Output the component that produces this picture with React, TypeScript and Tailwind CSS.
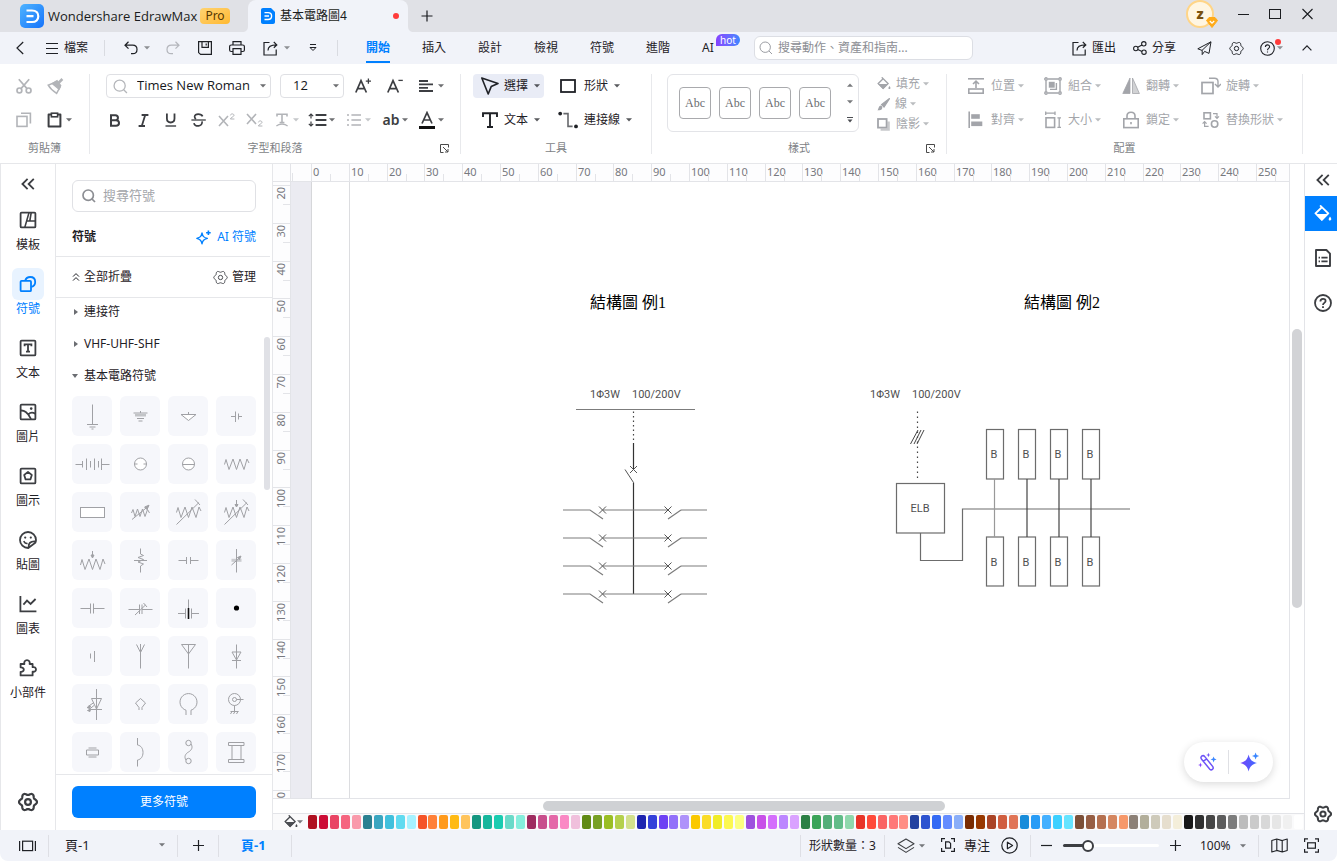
import React from "react";

type IconProps = {
  w: number;
  h: number;
  children: React.ReactNode;
  className?: string;
  sw?: number;
};

function Icon({ w, h, children, className = "", sw = 1.2 }: IconProps) {
  return (
    <svg
      width={w}
      height={h}
      viewBox={`0 0 ${w} ${h}`}
      fill="none"
      stroke="currentColor"
      strokeWidth={sw}
      className={`shrink-0 ${className}`}
      aria-hidden="true"
    >
      {children}
    </svg>
  );
}

function Caret({ className = "" }: { className?: string }) {
  return (
    <svg width="6" height="4" viewBox="0 0 6 4" className={`shrink-0 ${className}`} aria-hidden="true">
      <path d="M0 0.3H6L3 3.6Z" fill="currentColor" fillOpacity="0.75" />
    </svg>
  );
}

/* Six-lobed outline around the centre of an 18-unit box. */
const GEAR_PATH =
  Array.from({ length: 72 }, (_, i) => {
    const a = (i * Math.PI) / 36;
    const r = 7.2 + 0.9 * Math.cos(6 * a);
    return `${i === 0 ? "M" : "L"}${(9 + r * Math.cos(a)).toFixed(2)} ${(9 + r * Math.sin(a)).toFixed(2)}`;
  }).join("") + "Z";

function HexGear({ size, sw = 1.2, className = "" }: { size: number; sw?: number; className?: string }) {
  return (
    <svg
      width={size}
      height={size}
      viewBox="0 0 18 18"
      fill="none"
      stroke="currentColor"
      strokeWidth={sw}
      strokeLinejoin="round"
      className={`shrink-0 ${className}`}
      aria-hidden="true"
    >
      <path d={GEAR_PATH} />
      <circle cx="9" cy="9" r="2.6" />
    </svg>
  );
}

function Bucket({ size, className = "" }: { size: number; className?: string }) {
  return (
    <svg width={size} height={size} viewBox="0 0 16 16" className={`shrink-0 ${className}`} aria-hidden="true">
      <path d="M5.4 0.4L12.6 7.4L7 13L1.4 7.4L7 2" fill="none" stroke="currentColor" strokeWidth="1.6" />
      <path d="M1.2 8H13L7 14Z" fill="currentColor" />
      <path d="M14.2 10.2C15.2 11.6 15.8 12.5 15.1 13.4C14.5 14.1 13.4 13.8 13.1 13C12.9 12.2 13.5 11.3 14.2 10.2Z" fill="currentColor" />
    </svg>
  );
}

function ShareOut({ size, sw = 1.2 }: { size: number; sw?: number }) {
  return (
    <svg width={size} height={size} viewBox="0 0 15 15" fill="none" stroke="currentColor" strokeWidth={sw} className="shrink-0" aria-hidden="true">
      <path d="M6.5 1.5H1V14H13.2V8.5" />
      <path d="M5 9.5C5 6 7.5 3.9 13.5 3.9M10.8 1L13.8 3.9L10.8 6.8" />
    </svg>
  );
}

function Magnifier({ size, sw = 1.2 }: { size: number; sw?: number }) {
  return (
    <svg width={size} height={size} viewBox="0 0 14 14" fill="none" stroke="currentColor" strokeWidth={sw} className="shrink-0" aria-hidden="true">
      <circle cx="6.2" cy="6.2" r="5.2" />
      <path d="M10 10L13 13" />
    </svg>
  );
}

/* ---------- Title bar ---------- */

function TitleBar() {
  return (
    <header className="flex h-8 shrink-0 items-center bg-[#e0e1e6] pr-6 pl-5 text-[#1a1c20]">
      <svg width="24" height="24" viewBox="0 0 24 24" className="shrink-0" aria-hidden="true">
        <defs>
          <linearGradient id="logo" x1="0" y1="0" x2="1" y2="1">
            <stop offset="0" stopColor="#4fb4ff" />
            <stop offset="1" stopColor="#1573fb" />
          </linearGradient>
        </defs>
        <rect width="24" height="24" rx="5" fill="url(#logo)" />
        <path d="M6.5 6.5H12C16 6.5 18.3 9 18.3 12.2C18.3 15.5 16 18 12 18H6.5M6.5 12.2H13.5" fill="none" stroke="#fff" strokeWidth="2.2" />
      </svg>
      <span className="ml-1 w-[148px] font-['Open_Sans',sans-serif] text-[13px] leading-5 whitespace-nowrap">Wondershare EdrawMax</span>
      <span className="ml-1 flex h-4 w-[30px] items-center justify-center rounded-sm bg-gradient-to-br from-[#ffd36f] to-[#ffb92e] text-xs text-[#573800]">
        Pro
      </span>
      <svg width="6" height="6" viewBox="0 0 6 6" className="ml-3 self-end" aria-hidden="true">
        <path d="M6 0V6H0C4 6 6 4 6 0Z" fill="#f1f3f9" />
      </svg>
      <div className="flex h-8 w-40 items-center self-end rounded-t-lg bg-[#f1f3f9] pr-[9px] pl-[13px]">
        <svg width="14" height="16" viewBox="0 0 14 16" className="shrink-0" aria-hidden="true">
          <path d="M2 0H10L14 4V14C14 15.2 13.2 16 12 16H2C0.8 16 0 15.2 0 14V2C0 0.8 0.8 0 2 0Z" fill="#0080ff" />
          <path d="M3.5 4.6H7C9.4 4.6 10.6 6.1 10.6 8C10.6 9.9 9.4 11.5 7 11.5H3.5M3.5 8H8" fill="none" stroke="#fff" strokeWidth="1.4" />
        </svg>
        <span className="ml-[5px] text-xs">基本電路圖4</span>
        <span className="ml-auto h-1.5 w-1.5 rounded-full bg-[#ff3b3b]" />
      </div>
      <svg width="6" height="6" viewBox="0 0 6 6" className="self-end" aria-hidden="true">
        <path d="M0 0V6H6C2 6 0 4 0 0Z" fill="#f1f3f9" />
      </svg>
      <button type="button" aria-label="新增" className="ml-[7px]">
        <Icon w={12} h={12}>
          <path d="M6 0.5V11.5M0.5 6H11.5" />
        </Icon>
      </button>
      <button type="button" aria-label="帳戶" className="relative mb-1 ml-auto flex h-7 w-7 items-center justify-center rounded-full border-2 border-[#ffd587] bg-[#fff6e2]">
        <span className="text-sm font-black text-[#7a5210]">z</span>
        <svg width="12" height="11" viewBox="0 0 12 11" className="absolute -right-1.5 -bottom-0.5" aria-hidden="true">
          <path d="M3 0.5H9L11.5 3.5L6 10.5L0.5 3.5Z" fill="#ffab1a" stroke="#ffab1a" strokeLinejoin="round" />
          <path d="M3.8 4L6 6.2L8.2 4" stroke="#fff" strokeWidth="1.2" fill="none" />
        </svg>
      </button>
      <div className="mb-1 ml-6 flex items-center">
        <button type="button" aria-label="最小化">
          <Icon w={11} h={12} sw={1}>
            <path d="M0 6.5H11" />
          </Icon>
        </button>
        <button type="button" aria-label="最大化" className="ml-5">
          <Icon w={12} h={12} sw={1}>
            <rect x="0.5" y="1.5" width="11" height="9" />
          </Icon>
        </button>
        <button type="button" aria-label="關閉" className="ml-[21px]">
          <Icon w={11} h={12} sw={1.1}>
            <path d="M0.5 1L10.5 11M10.5 1L0.5 11" />
          </Icon>
        </button>
      </div>
    </header>
  );
}

/* ---------- Menu bar ---------- */

const MENU_TABS = ["開始", "插入", "設計", "檢視", "符號", "進階", "AI"];

function MenuBar() {
  return (
    <nav className="flex h-8 shrink-0 items-center bg-[#f1f3f9] pr-[25px] pl-4 text-[#1f2126]">
      <button type="button" aria-label="返回">
        <Icon w={8} h={14}>
          <path d="M7.2 1L1 7L7.2 13" />
        </Icon>
      </button>
      <button type="button" className="ml-[22px] flex items-center gap-1.5">
        <Icon w={12} h={13} sw={1}>
          <path d="M0 1.5H12M0 6.5H12M0 11.5H12" />
        </Icon>
        檔案
      </button>
      <span className="ml-4 h-4 w-px bg-[#d9dbe1]" />
      <button type="button" aria-label="復原" className="ml-[19px] flex items-center gap-1.5">
        <Icon w={14} h={14}>
          <path d="M4.5 0.8L1 4.2L4.5 7.6M1.2 4.2H8.6C11.4 4.2 13 6 13 8.4C13 10.9 11.3 12.6 8.8 12.6H7" />
        </Icon>
        <Caret className="text-[#6b6d72]" />
      </button>
      <button type="button" aria-label="重做" className="ml-4 text-[#b4b6bc]">
        <Icon w={14} h={14}>
          <path d="M9.5 0.8L13 4.2L9.5 7.6M12.8 4.2H5.4C2.6 4.2 1 6 1 8.4C1 10.9 2.7 12.6 5.2 12.6H7" />
        </Icon>
      </button>
      <button type="button" aria-label="儲存" className="ml-[18px]">
        <Icon w={14} h={14}>
          <path d="M0.6 0.6H13.4V13.4H2.6L0.6 11.6ZM4 0.6V6.4H10.4V0.6M8.2 2.4V4.4" />
        </Icon>
      </button>
      <button type="button" aria-label="列印" className="ml-[17px]">
        <Icon w={16} h={14}>
          <path d="M4 4V0.6H12V4M4 10.5H2.2C1.2 10.5 0.6 10 0.6 9V5.6C0.6 4.6 1.2 4 2.2 4H13.8C14.8 4 15.4 4.6 15.4 5.6V9C15.4 10 14.8 10.5 13.8 10.5H12M4 7.6H12V13.4H4Z" />
        </Icon>
      </button>
      <button type="button" aria-label="匯出檔案" className="ml-[18px] flex items-center gap-1.5">
        <ShareOut size={15} />
        <Caret className="text-[#6b6d72]" />
      </button>
      <button type="button" aria-label="更多" className="ml-[18px]">
        <Icon w={10} h={8} sw={1}>
          <path d="M2 0.5H8M2 3.5H8L5 6.5Z" />
        </Icon>
      </button>
      <span className="ml-[19px] h-4 w-px bg-[#d9dbe1]" />
      <div className="ml-3 flex h-full">
        {MENU_TABS.map((tab, i) => (
          <button
            key={tab}
            type="button"
            className={
              i === 0
                ? "relative flex h-full w-14 items-center px-4 font-bold text-[#0080ff]"
                : "relative flex h-full w-14 items-center px-4"
            }
          >
            {tab}
            {i === 0 && <span className="absolute bottom-px left-4 h-0.5 w-6 bg-[#0080ff]" />}
            {tab === "AI" && (
              <span className="absolute top-0.5 left-[30px] flex h-3 w-6 items-center justify-center rounded-full rounded-bl-none bg-gradient-to-r from-[#8540ff] to-[#3a86ff] text-[10px] leading-3 text-white">
                hot
              </span>
            )}
          </button>
        ))}
      </div>
      <label className="ml-3 flex h-6 w-[219px] items-center gap-[5px] rounded-md border border-[#dcdee4] bg-white pl-1 text-[#9b9da3]">
        <Magnifier size={14} sw={1} />
        <input
          type="text"
          aria-label="搜尋"
          placeholder="搜尋動作、資產和指南..."
          className="w-full bg-transparent text-xs outline-none placeholder:text-[#8c8e94]"
        />
      </label>
      <div className="ml-auto flex items-center">
        <button type="button" className="flex items-center gap-[5px]">
          <ShareOut size={15} />
          匯出
        </button>
        <button type="button" className="ml-[17px] flex items-center gap-[5px]">
          <Icon w={14} h={14} sw={1.1}>
            <circle cx="2.8" cy="7.5" r="2.2" />
            <circle cx="10.8" cy="2.8" r="2.2" />
            <circle cx="11" cy="11.2" r="2.2" />
            <path d="M4.7 6.3L9 3.9M4.8 8.5L9 10.4" />
          </Icon>
          分享
        </button>
        <button type="button" aria-label="傳送" className="ml-[21px]">
          <Icon w={15} h={15} sw={1}>
            <path d="M14 0.8L0.8 7.8L5 9.4L14 0.8L12 12.4L7.6 10.4L5.2 13.6V9.4" strokeLinejoin="round" />
          </Icon>
        </button>
        <button type="button" aria-label="設定" className="ml-[17px]">
          <HexGear size={15} sw={1.2} />
        </button>
        <button type="button" aria-label="說明" className="relative ml-4 flex items-center gap-0.5">
          <Icon w={15} h={15} sw={1.1}>
            <circle cx="7.5" cy="7.5" r="6.8" />
            <path d="M5.4 6C5.4 3.2 9.6 3.2 9.6 5.8C9.6 7.4 7.5 7.3 7.5 9.2M7.5 10.4V11.6" />
          </Icon>
          <Caret className="text-[#6b6d72]" />
          <span className="absolute -top-0.5 right-0.5 h-1.5 w-1.5 rounded-full bg-[#ff3b3b]" />
        </button>
        <button type="button" aria-label="收合" className="ml-[19px]">
          <Icon w={10} h={6} sw={1.2}>
            <path d="M0.6 5.4L5 0.9L9.4 5.4" />
          </Icon>
        </button>
      </div>
    </nav>
  );
}

/* ---------- Ribbon ---------- */

function Group({
  label,
  className,
  launcher,
  children,
}: {
  label: string;
  className: string;
  launcher?: boolean;
  children: React.ReactNode;
}) {
  return (
    <section className={`flex h-20 shrink-0 flex-col border-r border-[#e8e9ec] ${className}`}>
      <div className="h-[66px] shrink-0">{children}</div>
      <div className="grid h-4 shrink-0 grid-cols-[1fr_auto_1fr] items-center text-[11px] leading-4 text-[#7d7f85]">
        <span />
        <span>{label}</span>
        {launcher && (
          <button type="button" aria-label={`${label}選項`} className="mr-[11px] justify-self-end text-[#4a4a4a]">
            <Icon w={9} h={9} sw={1}>
              <path d="M3.5 8.5H0.5V0.5H8.5V3.5M3 3L8 8M8 5V8H5" />
            </Icon>
          </button>
        )}
      </div>
    </section>
  );
}

function Tool({
  icon,
  text,
  slot,
  caretGap,
  className = "",
}: {
  icon: React.ReactNode;
  text: string;
  slot: string;
  caretGap: string;
  className?: string;
}) {
  return (
    <button type="button" className={`flex h-6 items-center whitespace-nowrap ${className}`}>
      <span className={`flex shrink-0 items-center justify-center ${slot}`}>{icon}</span>
      <span className="ml-1.5">{text}</span>
      <Caret className={caretGap} />
    </button>
  );
}

function IconButton({ label, caret, className = "", children }: { label: string; caret?: string; className?: string; children: React.ReactNode }) {
  return (
    <button type="button" aria-label={label} className={`flex h-6 items-center justify-self-start ${className}`}>
      {children}
      {caret && <Caret className={caret} />}
    </button>
  );
}

const ARRANGE: { text: string; icon: React.ReactNode }[] = [
  {
    text: "位置",
    icon: (
      <Icon w={18} h={18} sw={1.6}>
        <path d="M1 1.8H17" />
        <rect x="1.8" y="12" width="14.4" height="4.2" />
        <path d="M9 11V4.5M6 7L9 4.2L12 7" />
      </Icon>
    ),
  },
  {
    text: "組合",
    icon: (
      <Icon w={18} h={18} sw={1.4}>
        <path d="M3.5 2H14.5M3.5 16H14.5M2 3.5V14.5M16 3.5V14.5" />
        <circle cx="2" cy="2" r="1.2" />
        <circle cx="16" cy="2" r="1.2" />
        <circle cx="2" cy="16" r="1.2" />
        <circle cx="16" cy="16" r="1.2" />
        <rect x="5.5" y="5.5" width="4.5" height="4.5" fill="currentColor" />
        <path d="M12.4 6V12.4H6" />
      </Icon>
    ),
  },
  {
    text: "翻轉",
    icon: (
      <Icon w={18} h={18} sw={0.8}>
        <path d="M8 1V16.5H0.8Z" fill="currentColor" />
        <path d="M10.5 1V16.5H17.4Z" fill="currentColor" fillOpacity="0.5" />
      </Icon>
    ),
  },
  {
    text: "旋轉",
    icon: (
      <Icon w={20} h={18} sw={1.7}>
        <rect x="1" y="5.5" width="11" height="11" />
        <path d="M8 1.2H13.5C16 1.2 17 2.4 17 4.5V9M14 7L17 10L20 7" strokeWidth="1.4" />
      </Icon>
    ),
  },
  {
    text: "對齊",
    icon: (
      <Icon w={18} h={18} sw={1.6}>
        <path d="M2.2 0.5V17" />
        <rect x="5" y="4" width="7" height="3" fill="currentColor" />
        <rect x="5" y="11.3" width="9.5" height="3" fill="currentColor" />
      </Icon>
    ),
  },
  {
    text: "大小",
    icon: (
      <Icon w={18} h={18} sw={1.6}>
        <rect x="2" y="6.8" width="8.6" height="9.6" />
        <path d="M1.5 2.2H11.5M1.7 0.5V4M11 0.5V4M15.2 7V16.4M13.4 6.8H17M13.4 16.4H17" strokeWidth="1.3" />
      </Icon>
    ),
  },
  {
    text: "鎖定",
    icon: (
      <Icon w={18} h={18} sw={1.6}>
        <rect x="1.8" y="7.8" width="14.4" height="8.8" />
        <path d="M5 7.8V5C5 2.6 6.6 1.2 9 1.2C11.4 1.2 13 2.6 13 5V7.8M9 11V13.2" />
      </Icon>
    ),
  },
  {
    text: "替換形狀",
    icon: (
      <Icon w={18} h={18} sw={1.6}>
        <rect x="2" y="1.8" width="6.4" height="6" />
        <circle cx="12.6" cy="13" r="3.2" />
        <path d="M11 2.6H15V7M13 5.4L15 7.4L17 5.4M6.6 15.4H2.6V11M0.6 12.6L2.6 10.6L4.6 12.6" strokeWidth="1.2" />
      </Icon>
    ),
  },
];

function Ribbon() {
  return (
    <div className="flex h-[100px] shrink-0 overflow-hidden border-b border-[#e6e7ea] bg-white pt-2.5 text-[#1f2126]">
      <Group label="剪貼簿" className="w-[90px]">
        <div className="grid grid-cols-[31px_1fr] gap-y-2.5 pl-4 text-[#b2b4b8]">
          <IconButton label="剪下">
            <Icon w={16} h={16} sw={1.7}>
              <circle cx="3.4" cy="12.4" r="2.4" />
              <circle cx="12.6" cy="12.4" r="2.4" />
              <path d="M2.8 1.2L11 10.6M13.2 1.2L5 10.6" />
            </Icon>
          </IconButton>
          <IconButton label="複製格式">
            <Icon w={17} h={17} sw={1.5}>
              <path d="M1.2 7.2L9 3.8L13 9L9.6 15.4C6 13 3 10.4 1.2 7.2Z" />
              <path d="M5.4 5.6L10 2.8L13.6 7.6L12 11Z" fill="currentColor" />
              <path d="M11.4 5L15.4 1" strokeWidth="2.6" />
            </Icon>
          </IconButton>
          <IconButton label="複製">
            <Icon w={16} h={16} sw={1.6}>
              <rect x="1" y="4.4" width="10" height="10" />
              <path d="M5 1.2H14.4V11.4" />
            </Icon>
          </IconButton>
          <IconButton label="貼上" caret="ml-1" className="text-[#3c3e42]">
            <Icon w={15} h={16} sw={2}>
              <path d="M4 2.6H1.6V14.6H13.4V2.6H11" strokeLinejoin="round" />
              <rect x="4.4" y="1.2" width="6.2" height="3.6" strokeWidth="1.6" />
            </Icon>
          </IconButton>
        </div>
      </Group>

      <Group label="字型和段落" className="w-[371px]" launcher>
        <div className="flex h-6 items-center pl-4">
          <label className="flex h-6 w-[165px] items-center rounded-sm border border-[#dfe0e4] pl-1.5 text-[#b4b6ba]">
            <Magnifier size={15} sw={1.2} />
            <select
              aria-label="字型"
              className="ml-[9px] h-full min-w-0 flex-1 appearance-none bg-transparent font-['Open_Sans',sans-serif] text-[13px] text-[#16181c] outline-none"
            >
              <option>Times New Roman</option>
            </select>
            <Caret className="mr-1 text-[#3c3e42]" />
          </label>
          <label className="ml-[9px] flex h-6 w-16 items-center rounded-sm border border-[#dfe0e4] pl-3">
            <select
              aria-label="字型大小"
              className="h-full min-w-0 flex-1 appearance-none bg-transparent font-['Open_Sans',sans-serif] text-[13px] text-[#16181c] outline-none"
            >
              <option>12</option>
            </select>
            <Caret className="mr-1 text-[#3c3e42]" />
          </label>
          <IconButton label="放大字型" className="ml-[11px] text-[#3c3e42]">
            <Icon w={16} h={16} sw={1.7}>
              <path d="M0.8 14.5L6 2.6L11.4 14.5M2.8 10.6H9.4" />
              <path d="M10.8 3.2H16M13.4 0.6V5.8" strokeWidth="1.3" />
            </Icon>
          </IconButton>
          <IconButton label="縮小字型" className="ml-4 text-[#3c3e42]">
            <Icon w={16} h={16} sw={1.7}>
              <path d="M0.8 14.5L6 2.6L11.4 14.5M2.8 10.6H9.4" />
              <path d="M11.4 2.4H15.8" strokeWidth="1.3" />
            </Icon>
          </IconButton>
          <IconButton label="對齊方式" caret="ml-1" className="ml-4 text-[#3c3e42]">
            <Icon w={15} h={12} sw={1.8}>
              <path d="M0 1H9M0 4.4H14M0 7.8H9M0 11H14" />
            </Icon>
          </IconButton>
        </div>
        <div className="mt-2.5 grid grid-cols-[28px_27px_27px_27px_28px_29px_33px_39px_35px_37px_auto] justify-start pl-[19px] text-[#3c3e42]">
          <IconButton label="粗體">
            <Icon w={12} h={13} sw={2}>
              <path d="M2 1.2H6.4C9.8 1.2 9.8 6.2 6.4 6.2H2ZM2 6.2H7C11 6.2 11 11.8 7 11.8H2Z" />
            </Icon>
          </IconButton>
          <IconButton label="斜體">
            <Icon w={12} h={13} sw={1.8}>
              <path d="M4.6 1H11.4M1.6 12H8M8.2 1L4.8 12" />
            </Icon>
          </IconButton>
          <IconButton label="底線">
            <Icon w={13} h={14} sw={1.8}>
              <path d="M2.9 0.5V5.6C2.9 10.8 10.5 10.8 10.5 5.6V0.5" />
              <path d="M1.5 13H12.1" strokeWidth="1.4" />
            </Icon>
          </IconButton>
          <IconButton label="刪除線">
            <Icon w={15} h={14} sw={1.7}>
              <path d="M11.6 3.4C10.4 0.6 3.6 0.2 3.6 3.8C3.6 4.8 4.2 5.6 5 6M11 8.4C12.4 13.6 3.4 14.4 3 10.2" />
              <path d="M0.4 7H14.8" strokeWidth="1.3" />
            </Icon>
          </IconButton>
          <IconButton label="上標" className="text-[#b2b4b8]">
            <Icon w={18} h={14} sw={1.6}>
              <path d="M1 3L10 13M10 3L1 13" />
              <path d="M12.4 2.4C12.6 0.4 16 0.4 16 2.4C16 3.6 12.6 4.6 12.4 6H16.4" strokeWidth="1" />
            </Icon>
          </IconButton>
          <IconButton label="下標" className="text-[#b2b4b8]">
            <Icon w={18} h={14} sw={1.6}>
              <path d="M1 1L10 11M10 1L1 11" />
              <path d="M12.4 9.4C12.6 7.4 16 7.4 16 9.4C16 10.6 12.6 11.6 12.4 13H16.4" strokeWidth="1" />
            </Icon>
          </IconButton>
          <IconButton label="文字效果" caret="ml-1" className="text-[#b2b4b8]">
            <Icon w={14} h={14} sw={1.6}>
              <path d="M2 3.4V1.2H12V3.4M7 1.2V9.6M4.6 9.6H9.4" />
              <path d="M1.4 13C4 10.6 10 10.6 12.6 13" strokeWidth="1.2" />
            </Icon>
          </IconButton>
          <IconButton label="行距" caret="ml-0.5">
            <Icon w={19} h={14} sw={1.8}>
              <path d="M7.6 2H18.4M7.6 7H18.4M7.6 12H18.4" />
              <path d="M3 1V5.6M3 8.4V13M0.8 3.2L3 1L5.2 3.2M0.8 10.8L3 13L5.2 10.8" strokeWidth="1.2" />
            </Icon>
          </IconButton>
          <IconButton label="清單" caret="ml-1" className="text-[#b2b4b8]">
            <Icon w={14} h={14} sw={1.6}>
              <path d="M0 2H2M0 7H2M0 12H2M4.4 2H14M4.4 7H14M4.4 12H14" />
            </Icon>
          </IconButton>
          <IconButton label="文字大小寫" caret="ml-0.5">
            <span className="w-[18px] text-sm leading-6 font-semibold">ab</span>
          </IconButton>
          <IconButton label="字型顏色" caret="ml-[3px]">
            <Icon w={16} h={18} sw={1.7}>
              <path d="M3 12.5L8 1.6L13 12.5M4.8 9H11.2" />
              <path d="M0 16.5H16" stroke="#111" strokeWidth="3" />
            </Icon>
          </IconButton>
        </div>
      </Group>

      <Group label="工具" className="w-[191px]">
        <div className="grid grid-cols-[85px_1fr] gap-y-2.5 pl-3">
          <Tool
            text="選擇"
            slot="w-[17px]"
            caretGap="ml-1.5"
            className="w-[71px] rounded-sm bg-[#e9ecf6] pl-2"
            icon={
              <Icon w={18} h={18} sw={1.6}>
                <path d="M0.8 1L17 6.6L10.2 9.6L7.2 17L0.8 1Z" strokeLinejoin="round" />
              </Icon>
            }
          />
          <Tool
            text="形狀"
            slot="w-5"
            caretGap="ml-1.5"
            icon={
              <Icon w={16} h={14} sw={1.8}>
                <rect x="1" y="1" width="14" height="12" />
              </Icon>
            }
          />
          <Tool
            text="文本"
            slot="w-[17px]"
            caretGap="ml-1.5"
            className="w-[71px] pl-2"
            icon={
              <Icon w={16} h={16} sw={1.9}>
                <path d="M1 5V1.2H15V5M8 1.2V15M5 15H11" />
              </Icon>
            }
          />
          <Tool
            text="連接線"
            slot="w-5"
            caretGap="ml-1.5"
            icon={
              <Icon w={20} h={18} sw={1.6}>
                <circle cx="2.2" cy="2.6" r="1.9" fill="currentColor" stroke="none" />
                <circle cx="18" cy="15.4" r="1.9" fill="currentColor" stroke="none" />
                <path d="M5.4 2.6H10V15.4H14.6" stroke="#66686c" />
              </Icon>
            }
          />
        </div>
      </Group>

      <Group label="樣式" className="w-[295px]" launcher>
        <div className="flex pl-[15px]">
          <div className="flex h-[58px] w-48 items-center gap-2 rounded-md border border-[#e3e4e8] pl-[11px]">
            {[0, 1, 2, 3].map((n) => (
              <button
                key={n}
                type="button"
                className="flex h-8 w-8 shrink-0 items-center justify-center rounded-sm border border-[#a9aaad] font-['Liberation_Serif','Noto_Sans_CJK_TC',serif] text-xs text-[#6a6c70]"
              >
                Abc
              </button>
            ))}
            <div className="ml-2 flex h-full flex-col items-center justify-between py-2 text-[#4b4d52]">
              <button type="button" aria-label="向上">
                <Caret className="rotate-180" />
              </button>
              <button type="button" aria-label="向下">
                <Caret />
              </button>
              <button type="button" aria-label="展開">
                <Icon w={6} h={6} sw={1}>
                  <path d="M0 0.5H6" />
                  <path d="M0.5 2.6H5.5L3 5.4Z" fill="currentColor" stroke="none" />
                </Icon>
              </button>
            </div>
          </div>
          <div className="ml-[18px] flex flex-col text-[#a3a5aa]">
            <button type="button" className="flex h-5 items-center">
              <Bucket size={14} />
              <span className="ml-[5px]">填充</span>
              <Caret className="ml-[3px]" />
            </button>
            <button type="button" className="flex h-5 items-center">
              <Icon w={13} h={13} sw={1.2}>
                <path d="M12.6 0.4L7 9L4.6 6.6Z" fill="currentColor" />
                <path d="M4.2 7.6C5.8 8.6 5.6 10.4 4.6 11.4C3.4 12.6 1.6 12 0.6 12.4C1.6 11 1.6 7.4 4.2 7.6Z" fill="currentColor" stroke="none" />
              </Icon>
              <span className="ml-[5px]">線</span>
              <Caret className="ml-[3px]" />
            </button>
            <button type="button" className="flex h-5 items-center">
              <Icon w={13} h={13} sw={1.8}>
                <rect x="1" y="1" width="8.6" height="8.6" />
                <path d="M11.6 3.6V11.6H3.6" strokeWidth="2.4" strokeOpacity="0.6" />
              </Icon>
              <span className="ml-1.5">陰影</span>
              <Caret className="ml-[3px]" />
            </button>
          </div>
        </div>
      </Group>

      <Group label="配置" className="w-[356px]">
        <div className="grid grid-cols-[77px_78px_80px_1fr] gap-y-2.5 pl-5 text-[#a3a5aa]">
          {ARRANGE.map((a) => (
            <Tool key={a.text} text={a.text} icon={a.icon} slot="w-[18px]" caretGap="ml-[3px]" />
          ))}
        </div>
      </Group>
    </div>
  );
}

/* ---------- Left navigation ---------- */

const NAV: { text: string; icon: React.ReactNode }[] = [
  {
    text: "模板",
    icon: (
      <Icon w={18} h={18} sw={1.8}>
        <rect x="1.6" y="1.6" width="14.8" height="14.8" rx="1" />
        <path d="M5.8 16.4L10 1.6M8 10H16.4M12.2 1.6L10.8 10" strokeWidth="1.6" />
      </Icon>
    ),
  },
  {
    text: "符號",
    icon: (
      <Icon w={18} h={18} sw={1.8}>
        <rect x="1.6" y="5.8" width="10.4" height="10.4" rx="1" />
        <path d="M6.2 5.6C7 3.2 8.8 2 11.2 2C14.2 2 16.2 4 16.2 7C16.2 9.2 14.8 11.2 12.4 11.8" />
      </Icon>
    ),
  },
  {
    text: "文本",
    icon: (
      <Icon w={18} h={18} sw={1.8}>
        <rect x="1.6" y="1.6" width="14.8" height="14.8" rx="1" />
        <path d="M5.6 7.2V5.4H12.4V7.2M9 5.4V12.6M7 12.6H11" />
      </Icon>
    ),
  },
  {
    text: "圖片",
    icon: (
      <Icon w={18} h={18} sw={1.8}>
        <rect x="1.6" y="1.6" width="14.8" height="14.8" rx="1" />
        <path d="M1.6 7.6C4.6 7 9 9.4 12 16M9.4 11.4C11 9.6 13.6 9.2 16.2 10.6" />
        <circle cx="12.2" cy="5.6" r="1.3" fill="currentColor" stroke="none" />
      </Icon>
    ),
  },
  {
    text: "圖示",
    icon: (
      <Icon w={18} h={18} sw={1.8}>
        <rect x="1.6" y="1.6" width="14.8" height="14.8" rx="1" />
        <path d="M9 5L12.8 7.9L11.4 12.4H6.6L5.2 7.9Z" strokeLinejoin="round" />
      </Icon>
    ),
  },
  {
    text: "貼圖",
    icon: (
      <Icon w={18} h={18} sw={1.8}>
        <path d="M9.2 17C4.6 17 1 13.4 1 9C1 4.6 4.6 1 9 1C13.4 1 17 4.6 17 9C17 10 16.8 10.8 16.4 11.6L9.2 17ZM9.6 16.4C9.2 12.4 11.4 10 16.4 10.4" />
        <path d="M4.8 10C5.4 11.8 6.8 12.6 8.6 12.4" strokeWidth="1.5" />
        <circle cx="6.2" cy="6.6" r="1.1" fill="currentColor" stroke="none" />
        <circle cx="11.8" cy="6.6" r="1.1" fill="currentColor" stroke="none" />
      </Icon>
    ),
  },
  {
    text: "圖表",
    icon: (
      <Icon w={18} h={18} sw={1.8}>
        <path d="M1.4 1V16.4H17.4M4.4 9.6L8 5.6L11.6 9L16.6 4" />
      </Icon>
    ),
  },
  {
    text: "小部件",
    icon: (
      <Icon w={18} h={18} sw={1.8}>
        <path
          d="M1.6 5H5.4C4.8 3 6 1.2 8 1.2C10 1.2 11.2 3 10.6 5H13.6V8.2C15.6 7.6 17 8.8 17 10.4C17 12 15.6 13.2 13.6 12.6V16.4H1.6V12.8C3.6 13 4.8 12 4.8 10.6C4.8 9.2 3.6 8.2 1.6 8.4Z"
          strokeLinejoin="round"
        />
      </Icon>
    ),
  },
];

function ChevronsLeft({ className = "" }: { className?: string }) {
  return (
    <Icon w={14} h={12} sw={1.8} className={className}>
      <path d="M6.6 0.8L1.4 6L6.6 11.2M12.8 0.8L7.6 6L12.8 11.2" />
    </Icon>
  );
}

function LeftRail() {
  return (
    <aside className="flex w-14 shrink-0 flex-col items-center border-x border-[#e6e7ea] bg-white text-[#3c3e42]">
      <button type="button" aria-label="收合面板" className="flex h-10 items-center">
        <ChevronsLeft />
      </button>
      {NAV.map((item) => {
        const active = item.text === "符號";
        return (
          <button key={item.text} type="button" className="flex h-16 w-full flex-col items-center">
            <span
              className={
                active
                  ? "flex h-8 w-8 items-center justify-center rounded-md bg-[#e8f3ff] text-[#0080ff]"
                  : "flex h-8 w-8 items-center justify-center"
              }
            >
              {item.icon}
            </span>
            <span className={active ? "leading-[18px] text-[#0080ff]" : "leading-[18px] text-[#1f2126]"}>{item.text}</span>
          </button>
        );
      })}
      <button type="button" aria-label="設定" className="mt-auto mb-3 flex h-8 items-center">
        <HexGear size={20} sw={2} />
      </button>
    </aside>
  );
}

/* ---------- Symbol library ---------- */

const ZIGZAG = "M8.5 20.5L10 15.5L13 25.5L17 15L20.5 25.5L24 15L28 25.5L31 15L33 19";

const SYMBOLS: { name: string; art: React.ReactNode }[] = [
  { name: "接地", art: <path d="M20.5 8.5V28.5M15 28.5H26M17.5 31H23.5M19.5 33H21.5" /> },
  {
    name: "機殼接地",
    art: (
      <>
        <path d="M20.5 15V17M13.5 17H27.5M17 22.5H24M18.5 25H22.5" />
        <path d="M15 19.2H26" strokeWidth="2.6" strokeOpacity="0.6" />
      </>
    ),
  },
  { name: "訊號接地", art: <path d="M20.5 16V18.5M13 18.5H28L20.5 24.5Z" fill="#fff" /> },
  { name: "電池", art: <path d="M15 20.5H19.5M19.5 15.5V26M22.5 17.5V23.5M22.5 20.5H26" /> },
  {
    name: "電池組",
    art: <path d="M3.5 20.5H10.5M10.5 17V23.5M14.5 14.5V26M18.5 17V23.5M22.5 14.5V26M26.5 17V23.5M29.5 14.5V26M29.5 20.5H37.5" />,
  },
  {
    name: "交流電源",
    art: (
      <>
        <circle cx="20.5" cy="20" r="6" fill="#fff" />
        <path d="M14.5 20H17.5M23.5 20H26.5" />
      </>
    ),
  },
  {
    name: "電流源",
    art: (
      <>
        <circle cx="20.5" cy="20" r="6" fill="#fff" />
        <path d="M14.5 20.5H26.5" />
      </>
    ),
  },
  { name: "電阻", art: <path d={ZIGZAG} /> },
  { name: "電阻器", art: <rect x="8.5" y="15.5" width="24" height="10" fill="#fff" /> },
  {
    name: "可變電阻",
    art: (
      <>
        <path d="M11.5 21L13 17.5L15 24.5L17.5 17L20 24.5L22.5 17L25 24.5L27.5 17.5L29.5 21M12 27.5L28 14.5" />
        <path d="M29 13.2L24.6 15L27 17.6Z" fill="currentColor" />
      </>
    ),
  },
  {
    name: "微調電阻",
    art: (
      <>
        <path d={ZIGZAG} />
        <path d="M8.5 32.5L31 10.5M27 7.5L32 13" />
      </>
    ),
  },
  {
    name: "預設電阻",
    art: (
      <>
        <path d={ZIGZAG} />
        <path d="M8.5 32.5L31 10.5M27 7.5L32 13M20.5 8V14" />
        <path d="M19 12.5H22L20.5 15Z" fill="currentColor" />
      </>
    ),
  },
  {
    name: "電位器",
    art: (
      <>
        <path d="M8.5 25L10 19.5L13 29.5L17 19L20.5 29.5L24 19L28 29.5L31 19L33 24M20.5 11V17" />
        <path d="M19 15H22L20.5 18Z" fill="currentColor" />
      </>
    ),
  },
  { name: "抽頭電阻", art: <path d="M20.5 8.5V14L23.5 15.5L18 17.5L23.5 19.5L18 22L23.5 24L20.5 26V32.5M14 20.5H27" /> },
  { name: "電容", art: <path d="M10.5 20.5H18.5M18.5 17V24M22.5 17V24M22.5 20.5H30.5" /> },
  {
    name: "可變電容",
    art: (
      <>
        <path d="M20.5 9V32.5M15.5 25L24 17.5" />
        <path d="M15.5 20.3H25.5" strokeWidth="3" strokeOpacity="0.5" />
        <path d="M25 16L21.5 17.5L23.5 19.5Z" fill="currentColor" />
      </>
    ),
  },
  { name: "電容器", art: <path d="M8.5 20.5H18.5M18.5 15.5V25.5M21.5 15.5V25.5M21.5 20.5H32.5" /> },
  { name: "微調電容", art: <path d="M8.5 21.5H19.5M19.5 16.5V26M22 16.5V26M22 21.5H32.5M15 27L25.5 17M23.5 15L27 19" /> },
  {
    name: "穿心電容",
    art: (
      <>
        <path d="M20.5 11.5V31M10 25.5H17.5M23.5 25.5H31M17.5 20.5V30.5M23.5 20.5V30.5" />
        <path d="M20.5 20V31" stroke="#111" strokeWidth="1.6" />
      </>
    ),
  },
  { name: "接點", art: <circle cx="20.5" cy="20" r="2.6" fill="#000" stroke="none" /> },
  { name: "端子", art: <path d="M18.5 17.5V22.5M22.5 15V26" /> },
  { name: "天線", art: <path d="M20.5 8V32.5M16.5 8.5L20.5 16.5L24.5 8.5" /> },
  { name: "環形天線", art: <path d="M20.5 8V32.5M13.5 8.5H27.5L20.5 18Z" /> },
  { name: "二極體", art: <path d="M20.5 8.5V32.5M16 16H25L20.5 24ZM16 24.5H25" /> },
  {
    name: "發光二極體",
    art: (
      <>
        <path d="M24.5 5V36M19.5 14.5H29.5L24.5 25ZM19 25.5H30M22 18.5L16 22.5M22 21.5L17 25.5" />
        <path d="M15 23.5L18.5 22L17.5 24.5Z M15.5 26.5L18.5 25L18 27.5Z" fill="currentColor" />
      </>
    ),
  },
  { name: "耳機", art: <path d="M19 26V23.5L15.5 19L20.5 14.5L25.5 19L22 23.5V26" /> },
  { name: "燈", art: <path d="M18 31V26.2A8.5 8.5 0 1 1 23 26.2V31" /> },
  {
    name: "旋轉機",
    art: (
      <>
        <circle cx="18.5" cy="15.5" r="6" />
        <circle cx="18.5" cy="15.5" r="2" />
        <path d="M20.5 15.5H27.5M18.5 21.5V27.5M14.5 27.5H22.5M16 27.5L14.5 30M19 27.5L17.5 30M22 27.5L20.5 30" />
      </>
    ),
  },
  { name: "晶體", art: <path d="M14.5 18H26.5V23H14.5ZM16.5 16H24.5M16.5 25H24.5" /> },
  { name: "延遲元件", art: <path d="M17.5 6V13C21 13.5 23 16.5 23 20.5C23 24.5 21 27.5 17.5 28V34.5" /> },
  {
    name: "保險絲",
    art: (
      <>
        <circle cx="20.5" cy="11" r="2.7" />
        <circle cx="20.5" cy="29" r="2.7" />
        <path d="M23 12C25 15 24 18 20.5 20C17 22 16 25 18 28" />
      </>
    ),
  },
  { name: "磁芯", art: <path d="M12.5 10.5H28V13.5H12.5ZM12.5 27.5H28V30.5H12.5ZM16 13.5V27.5M25 13.5V27.5" /> },
];

function SymbolPanel() {
  return (
    <aside className="flex w-[217px] shrink-0 flex-col border-r border-[#e6e7ea] bg-white text-[#1f2126]">
      <label className="mt-4 ml-4 flex h-8 w-46 shrink-0 items-center gap-[7px] rounded-md border border-[#e0e1e5] pl-[9px] text-[#8c8e93]">
        <Magnifier size={14} sw={1.7} />
        <input
          type="text"
          aria-label="搜尋符號"
          placeholder="搜尋符號"
          className="w-full bg-transparent text-[13px] outline-none placeholder:text-[#a3a5aa]"
        />
      </label>
      <div className="mr-0.5 flex h-[45px] shrink-0 items-center justify-between border-b border-[#e6e7ea] pt-1.5 pr-3.5 pl-4">
        <h2 className="font-bold">符號</h2>
        <button type="button" className="flex items-center gap-1.5 text-[#0080ff]">
          <Icon w={15} h={15} sw={1.3}>
            <path d="M6 3C6.8 6.4 7.6 7.4 11.4 8.4C7.6 9.4 6.8 10.4 6 13.8C5.2 10.4 4.4 9.4 0.8 8.4C4.4 7.4 5.2 6.4 6 3Z" strokeLinejoin="round" />
            <path d="M12.4 0.4V5M10.1 2.7H14.7" strokeWidth="1.6" />
          </Icon>
          AI 符號
        </button>
      </div>
      <div className="flex h-[41px] shrink-0 items-center justify-between border-b border-[#e6e7ea] pr-4 pl-4">
        <button type="button" className="flex items-center gap-1">
          <Icon w={8} h={10} sw={1}>
            <path d="M1 4.6L4 1.6L7 4.6M1 8.6L4 5.6L7 8.6" />
          </Icon>
          全部折疊
        </button>
        <button type="button" className="flex items-center gap-1">
          <HexGear size={15} sw={1.2} className="text-[#4b4d52]" />
          管理
        </button>
      </div>
      <div className="flex min-h-0 flex-1">
        <div className="w-52 shrink-0 overflow-hidden pl-4">
          <ul className="-mt-0.5">
            {["連接符", "VHF-UHF-SHF", "基本電路符號"].map((name, i) => (
              <li key={name}>
                <button type="button" className="flex h-8 w-full items-center gap-1.5">
                  <svg width="6" height="6" viewBox="0 0 6 6" className="shrink-0 text-[#6b6d72]" aria-hidden="true">
                    <path d={i < 2 ? "M2 0L6 3L2 6Z" : "M0 1H6L3 5Z"} fill="currentColor" />
                  </svg>
                  {name}
                </button>
              </li>
            ))}
          </ul>
          <div className="mt-1 grid w-46 grid-cols-4 gap-2">
            {SYMBOLS.map((s) => (
              <button key={s.name} type="button" aria-label={s.name} className="h-10 w-10 rounded-md bg-[#f6f7fb] text-[#a0a1a5]">
                <svg width="40" height="40" viewBox="0 0 40 40" fill="none" stroke="currentColor" strokeWidth="1" aria-hidden="true">
                  {s.art}
                </svg>
              </button>
            ))}
          </div>
        </div>
        <div className="mt-[39px] h-[153px] w-1.5 rounded-full bg-[#e0e1e6]" />
      </div>
      <div className="shrink-0 border-t border-[#e6e7ea] pt-[11px] pb-3 pl-4">
        <button type="button" className="h-8 w-46 rounded-md bg-[#0080ff] text-white">
          更多符號
        </button>
      </div>
    </aside>
  );
}

/* ---------- Canvas ---------- */

const STEP = 37.8;
const span = (i: number) => Math.round((i + 1) * STEP) - Math.round(i * STEP);

function HorizontalRuler() {
  return (
    <div className="flex h-[18px] shrink-0 overflow-hidden border-b border-[#e3e4e8] bg-[#fdfdfe] text-[11px] leading-4 text-[#77797e]">
      <div className="w-[18px] shrink-0 border-r border-[#e3e4e8]" />
      <div className="ml-px h-2 w-[19px] shrink-0 self-end border-l border-[#e3e4e8]" />
      {Array.from({ length: 26 }, (_, i) => (
        <div key={i} className="flex shrink-0" style={{ width: span(i) }}>
          <div className="h-full w-[19px] shrink-0 border-l border-[#e3e4e8] pl-px">{i * 10}</div>
          <div className="h-[7px] shrink-0 self-end border-l border-[#e3e4e8]" />
        </div>
      ))}
    </div>
  );
}

function VerticalRuler() {
  return (
    <div className="flex w-[18px] shrink-0 flex-col overflow-hidden border-r border-[#e3e4e8] bg-[#fdfdfe] pt-[3px] text-[11px] text-[#77797e]">
      {Array.from({ length: 17 }, (_, i) => (
        <div key={i} className="flex shrink-0 flex-col" style={{ height: span(i) }}>
          <div className="flex h-[19px] w-full shrink-0 items-start border-t border-[#e3e4e8] pt-px">
            <span className="rotate-180 leading-4 [writing-mode:vertical-rl]">{(i + 2) * 10}</span>
          </div>
          <div className="w-[7px] self-end border-t border-[#e3e4e8]" />
        </div>
      ))}
    </div>
  );
}

const BRANCHES = [510, 538, 566, 594];
const BREAKERS = [986, 1018, 1050, 1082];

function BranchDiagram() {
  return (
    <svg width="150" height="224" viewBox="560 384 150 224" className="absolute top-[202px] left-[248px]" fill="none" stroke="#7c7c7c" strokeWidth="1.2">
      <g fill="#505050" stroke="none" fontFamily="'Roboto', sans-serif" fontSize="11">
        <text x="590" y="398">1Φ3W</text>
        <text x="632" y="398">100/200V</text>
      </g>
      <path d="M576 409.5H695" />
      <path d="M633.5 411.5V443" stroke="#444" strokeDasharray="1.5 3" />
      <path d="M633.5 443V469M633.5 482.5V594" stroke="#333" />
      <path d="M630 466L637 473M637 466L630 473M625 469.5L633.5 482.5" stroke="#555" strokeWidth="1" />
      {BRANCHES.map((y) => (
        <g key={y}>
          <path d={`M563 ${y}H590L603 ${y + 9}M603 ${y}H667M681 ${y}H707M681 ${y}L668 ${y + 9}`} />
          <path
            d={`M599 ${y - 3.5}L606 ${y + 3.5}M606 ${y - 3.5}L599 ${y + 3.5}M664.5 ${y - 3.5}L671.5 ${y + 3.5}M671.5 ${y - 3.5}L664.5 ${y + 3.5}`}
            stroke="#555"
            strokeWidth="1"
          />
        </g>
      ))}
    </svg>
  );
}

function PanelDiagram() {
  return (
    <svg width="266" height="208" viewBox="868 384 266 208" className="absolute top-[202px] left-[556px]" fill="none" stroke="#6c6c6c" strokeWidth="1.2">
      <g fill="#505050" stroke="none" fontFamily="'Roboto', sans-serif" fontSize="11">
        <text x="870" y="398">1Φ3W</text>
        <text x="912" y="398">100/200V</text>
        <text x="920" y="512" textAnchor="middle">ELB</text>
        {BREAKERS.map((x) => (
          <g key={x}>
            <text x={x + 8} y="458" textAnchor="middle">B</text>
            <text x={x + 8} y="566" textAnchor="middle">B</text>
          </g>
        ))}
      </g>
      <path d="M917.5 411.5V481" stroke="#444" strokeDasharray="1.5 3.5" />
      <path d="M910.5 444L918 430M914 444L921 430M917 444L924 430" stroke="#444" strokeWidth="1" />
      <rect x="896.5" y="483.5" width="48" height="49.5" />
      <path d="M920.5 533V560.5H962.5V509H1130" />
      {BREAKERS.map((x, i) => (
        <g key={x}>
          <rect x={x + 0.5} y="429.5" width="17" height="49.5" />
          <rect x={x + 0.5} y="537" width="17" height="49" />
          <path d={`M${x + 8.5 + (i > 0 ? 0.5 : 0)} 479V537`} stroke={i === 0 ? "#999" : "#444"} />
        </g>
      ))}
    </svg>
  );
}

function Workspace() {
  return (
    <main className="flex min-w-0 flex-1 flex-col bg-white">
      <div className="flex min-h-0 flex-1">
        <div className="flex min-w-0 flex-1 flex-col border-r border-[#e3e4e8]">
          <HorizontalRuler />
          <div className="flex min-h-0 flex-1">
            <VerticalRuler />
            <div className="w-5 shrink-0 bg-[#ebebf1]" />
            <div className="relative flex min-w-0 flex-1 overflow-hidden border-l border-[#d6d7da]">
              <div className="w-[38px] shrink-0 border-r border-[#dcdde0]" />
              <p className="absolute top-28 left-[278px] font-['Liberation_Serif','Noto_Sans_CJK_TC',serif] text-base leading-[18px] text-black">結構圖 例1</p>
              <p className="absolute top-28 left-[712px] font-['Liberation_Serif','Noto_Sans_CJK_TC',serif] text-base leading-[18px] text-black">結構圖 例2</p>
              <BranchDiagram />
              <PanelDiagram />
              <div className="absolute right-4 bottom-4 flex h-10 w-[89px] items-center justify-center gap-[11px] rounded-full bg-white shadow-[0_2px_8px_rgba(0,0,0,0.15)]">
                <button type="button" aria-label="AI 魔術棒">
                  <svg width="20" height="20" viewBox="0 0 20 20" fill="none" stroke="#6e54f7" strokeWidth="1.5" aria-hidden="true">
                    <path d="M4.6 4.2C5.6 3.4 7 3.6 7.8 4.6L15.8 14.6C17.2 17 14.4 18.8 12.8 17.2L4.6 7.2C3.8 6.2 3.8 5 4.6 4.2ZM6.4 9.2L9.8 6.8" />
                    <path d="M16.6 4.4L17.4 6.6L19.6 7.4L17.4 8.2L16.6 10.4L15.8 8.2L13.6 7.4L15.8 6.6Z" fill="#3a86ff" stroke="none" />
                    <path d="M3.4 10.6L4 12.4L5.8 13L4 13.6L3.4 15.4L2.8 13.6L1 13L2.8 12.4Z" fill="#8540ff" stroke="none" />
                    <path d="M11.4 0.8L12 2.4L13.6 3L12 3.6L11.4 5.2L10.8 3.6L9.2 3L10.8 2.4Z" fill="#6e54f7" stroke="none" />
                  </svg>
                </button>
                <span className="h-6 w-px bg-[#dfe0e4]" />
                <button type="button" aria-label="AI 助手">
                  <svg width="20" height="20" viewBox="0 0 20 20" aria-hidden="true">
                    <defs>
                      <linearGradient id="spark" x1="0" y1="0" x2="1" y2="0">
                        <stop offset="0" stopColor="#7443fb" />
                        <stop offset="1" stopColor="#3f6bff" />
                      </linearGradient>
                    </defs>
                    <path d="M8.6 2.4C9.8 7.4 11.8 9.6 17 11C11.8 12.4 9.8 14.6 8.6 19.6C7.4 14.6 5.4 12.4 0.2 11C5.4 9.6 7.4 7.4 8.6 2.4Z" fill="url(#spark)" />
                    <path d="M15.6 0.4L16.6 3L19.2 4L16.6 5L15.6 7.6L14.6 5L12 4L14.6 3Z" fill="#3a86ff" />
                  </svg>
                </button>
              </div>
            </div>
          </div>
        </div>
        <div className="flex w-3.5 shrink-0 flex-col items-center">
          <div className="h-[26%] shrink-0" />
          <div className="h-[44%] w-2.5 rounded-full bg-[#d2d3d6]" />
        </div>
      </div>
      <div className="mr-3.5 h-px shrink-0 bg-[#e3e4e8]" />
      <div className="flex h-3.5 shrink-0 items-center pl-[270px]">
        <div className="h-2.5 w-[402px] rounded-full bg-[#cfd1d4]" />
      </div>
      <Palette />
    </main>
  );
}

const COLORS =
  "b01020 cc0c36 e94464 f5657f f99aab 2a8090 3aa6c0 40c0dc 60dbf0 a6f2ff f55428 ff8038 ff9a1c ffba14 ffc45c 149680 16b69c 1accb0 6adac8 86eedc 9e2c60 c84e8c e468a8 fa88c4 f0c0dc 608a14 78a024 9abe24 b4d04c d2e08c 1e24b0 3440da 6e40f4 9270fa ae92fa fac800 fadc28 f0ec28 fcf850 fcff80 9e50de c850e8 d46efc bc86ff daa2ff 2c8044 3ca458 54ae78 62bc88 90d8ac e83428 ff4a3a fa6464 ff7878 ff8e84 2442a0 2e54d0 346af4 648cff 8aaef8 7a2c02 983800 aa4426 d05e40 e07456 188cda 289cf6 44b0ff 3cd0ff 66e4ff 7c5038 965e44 b47050 d48660 f6986a 8c8076 b2ae9a cecaba e6dece f4eeda 181818 303030 464646 5c5c5c 7c7c7c bcbcbc cacaca d8d8d8 e6e6e6 f0f0f0 ffffff".split(
    " "
  );

function Palette() {
  return (
    <div className="flex h-[17px] shrink-0 items-center border-t border-[#e3e4e8] bg-[#fafafb] pr-px pl-[11px]">
      <button type="button" aria-label="填充顏色" className="flex w-6 shrink-0 items-center text-[#4b4d52]">
        <Bucket size={14} />
        <Caret className="-ml-px" />
      </button>
      <div className="flex min-w-0 flex-1 justify-between">
        {COLORS.map((c) => (
          <button key={c} type="button" aria-label={`#${c}`} className="h-3.5 w-[9px] rounded-xs" style={{ backgroundColor: `#${c}` }} />
        ))}
      </div>
    </div>
  );
}

/* ---------- Right rail ---------- */

function RightRail() {
  return (
    <aside className="flex w-[33px] shrink-0 flex-col items-center border-l border-[#e3e4e8] bg-white text-[#3c3e42]">
      <button type="button" aria-label="展開面板" className="flex h-8 w-full items-center justify-center pl-1">
        <ChevronsLeft />
      </button>
      <button type="button" aria-label="填充" className="flex h-[35px] w-full items-center justify-center bg-[#0080ff] pl-1 text-white">
        <Bucket size={18} />
      </button>
      <button type="button" aria-label="屬性" className="mt-2 flex h-[38px] w-full items-center justify-center pl-1">
        <Icon w={16} h={18} sw={1.9}>
          <path d="M1 1H11.4L15 4.6V17H1Z" strokeLinejoin="round" />
          <path d="M3.6 8.6H5M3.6 12.4H5M6.4 8.6H12.6M6.4 12.4H12.6" strokeWidth="1.6" />
        </Icon>
      </button>
      <button type="button" aria-label="說明" className="mt-2 flex h-9 w-full items-center justify-center pl-1">
        <Icon w={18} h={18} sw={1.8}>
          <circle cx="9" cy="9" r="8" />
          <path d="M6.4 7.4C6.4 4 11.6 4 11.6 7C11.6 9 9 8.8 9 11M9 12.2V14" />
        </Icon>
      </button>
      <button type="button" aria-label="設定" className="mt-auto flex h-8 w-full items-center justify-center pl-1">
        <HexGear size={18} sw={2} />
      </button>
    </aside>
  );
}

/* ---------- Status bar ---------- */

function Divider({ className }: { className: string }) {
  return <span className={`h-[22px] w-px shrink-0 bg-[#dedfe5] ${className}`} />;
}

function StatusBar() {
  return (
    <footer className="flex h-[31px] shrink-0 items-center rounded-b-lg bg-[#f1f3f9] pr-[18px] pl-[19px] text-[#1f2126]">
      <button type="button" aria-label="頁面檢視">
        <Icon w={17} h={12}>
          <path d="M0.6 1V11M16.4 1V11" />
          <rect x="3.6" y="1.2" width="10" height="9.4" />
        </Icon>
      </button>
      <Divider className="ml-3" />
      <label className="ml-4 flex w-[100px] items-center">
        <select aria-label="頁面" className="min-w-0 flex-1 appearance-none bg-transparent text-[13px] outline-none">
          <option>頁-1</option>
        </select>
        <Caret className="text-[#4b4d52]" />
      </label>
      <Divider className="ml-3" />
      <button type="button" aria-label="新增頁面" className="ml-[15px]">
        <Icon w={11} h={11}>
          <path d="M5.5 0V11M0 5.5H11" />
        </Icon>
      </button>
      <Divider className="ml-3.5" />
      <button type="button" className="ml-[22px] w-[50px] text-left text-[13px] font-bold text-[#0080ff]">
        頁-1
      </button>
      <Divider className="" />
      <div className="ml-auto flex items-center">
        <Divider className="" />
        <span className="ml-2 w-[67px] whitespace-nowrap">形狀數量：3</span>
        <Divider className="ml-2" />
        <button type="button" aria-label="圖層" className="ml-3 flex items-center gap-1 text-[#3c3e42]">
          <Icon w={18} h={16} sw={1.1}>
            <path d="M9 1L17 5.8L9 10.6L1 5.8ZM1 9.4L9 14.4L17 9.4" strokeLinejoin="round" />
          </Icon>
          <Caret className="text-[#4b4d52]" />
        </button>
        <button type="button" className="ml-4 flex items-center gap-[9px] text-[13px]">
          <Icon w={14} h={14}>
            <path d="M0.6 4V0.6H4M10 0.6H13.4V4M13.4 10V13.4H10M4 13.4H0.6V10" />
            <path d="M4.6 3.8H8L9.6 5.4V10.2H4.6Z" />
          </Icon>
          專注
        </button>
        <button type="button" aria-label="播放" className="ml-[11px]">
          <Icon w={17} h={17}>
            <circle cx="8.5" cy="8.5" r="7.7" />
            <path d="M6.4 5.2L11.6 8.5L6.4 11.8Z" strokeLinejoin="round" />
          </Icon>
        </button>
        <Divider className="ml-3" />
        <button type="button" aria-label="縮小" className="ml-2.5">
          <Icon w={11} h={11}>
            <path d="M0 5.5H11" />
          </Icon>
        </button>
        <input
          type="range"
          aria-label="縮放"
          min={0}
          max={100}
          defaultValue={23}
          className="ml-[11px] h-[3px] w-24 appearance-none rounded-full bg-[linear-gradient(to_right,#3c3e42_24%,#ffffff_24%)] [&::-webkit-slider-thumb]:h-3 [&::-webkit-slider-thumb]:w-3 [&::-webkit-slider-thumb]:appearance-none [&::-webkit-slider-thumb]:rounded-full [&::-webkit-slider-thumb]:border-2 [&::-webkit-slider-thumb]:border-[#3c3e42] [&::-webkit-slider-thumb]:bg-white"
        />
        <button type="button" aria-label="放大" className="ml-[11px]">
          <Icon w={11} h={11}>
            <path d="M5.5 0V11M0 5.5H11" />
          </Icon>
        </button>
        <label className="ml-[19px] flex w-[46px] items-center">
          <select aria-label="縮放比例" className="min-w-0 flex-1 appearance-none bg-transparent text-xs outline-none">
            <option>100%</option>
          </select>
          <Caret className="text-[#4b4d52]" />
        </label>
        <Divider className="ml-3" />
        <button type="button" aria-label="導覽圖" className="ml-3">
          <Icon w={17} h={15} sw={1.1}>
            <path d="M0.8 2.6L5.8 1L11.2 2.6L16.2 1V12.4L11.2 14L5.8 12.4L0.8 14ZM5.8 1V12.4M11.2 2.6V14" strokeLinejoin="round" />
          </Icon>
        </button>
        <button type="button" aria-label="全螢幕" className="ml-4">
          <Icon w={15} h={15}>
            <path d="M0.6 4V0.8H4M11 0.8H14.4V4M14.4 11V14.2H11M4 14.2H0.6V11" />
            <rect x="3.6" y="4.8" width="7.8" height="5.4" />
          </Icon>
        </button>
      </div>
    </footer>
  );
}

export default function App() {
  return (
    <div className="flex h-screen flex-col overflow-hidden bg-white font-['Noto_Sans','Noto_Sans_CJK_TC',sans-serif] text-xs">
      <TitleBar />
      <MenuBar />
      <Ribbon />
      <div className="flex min-h-0 flex-1">
        <LeftRail />
        <SymbolPanel />
        <Workspace />
        <RightRail />
      </div>
      <StatusBar />
    </div>
  );
}
